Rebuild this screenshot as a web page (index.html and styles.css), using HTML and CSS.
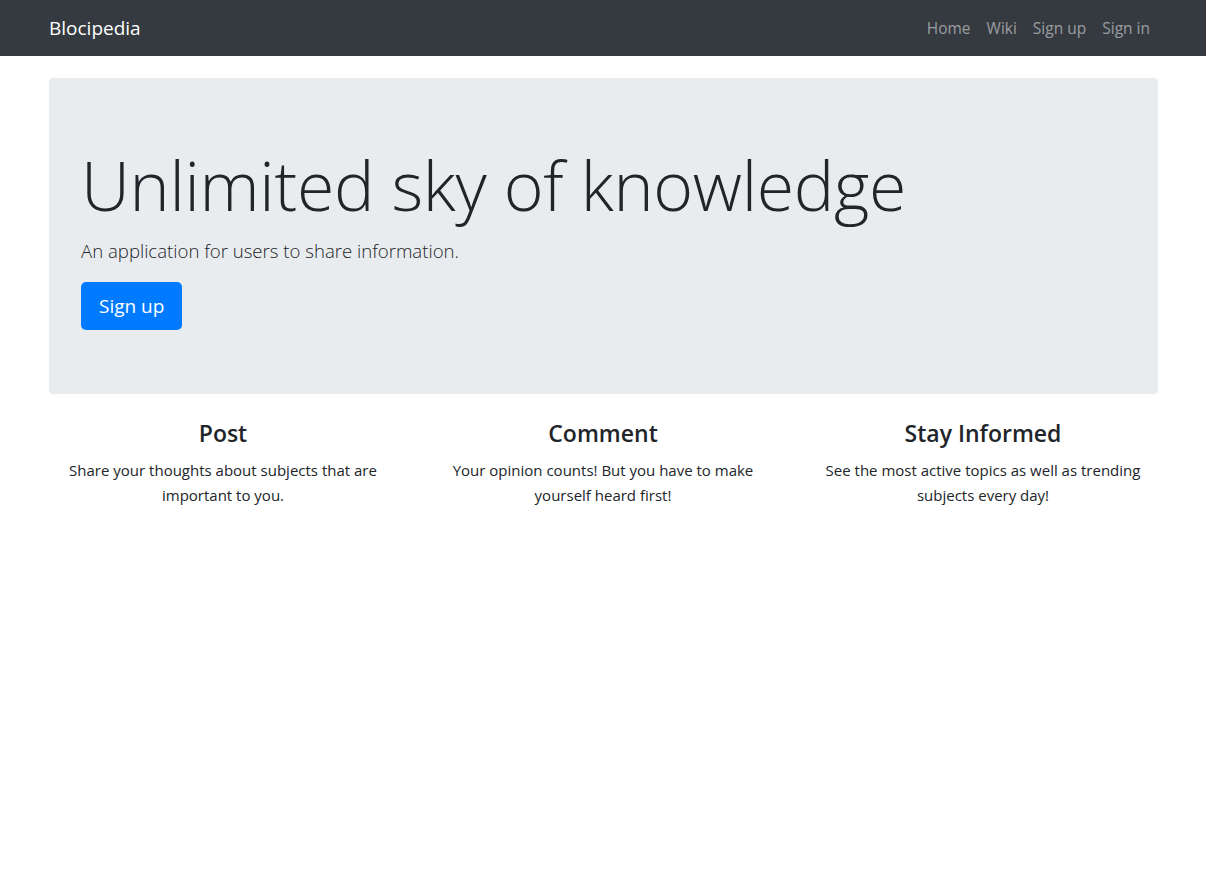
FILE: index.html
```html
<!DOCTYPE html>
<html lang="en">
<head>
<meta charset="utf-8">
<title>Blocipedia</title>
<link rel="stylesheet" href="styles.css">
</head>
<body>
<nav class="navbar">
  <div class="container navbar-inner">
    <a class="brand" href="#">Blocipedia</a>
    <ul class="nav-links">
      <li><a href="#">Home</a></li>
      <li><a href="#">Wiki</a></li>
      <li><a href="#">Sign up</a></li>
      <li><a href="#">Sign in</a></li>
    </ul>
  </div>
</nav>
<main class="container">
  <section class="jumbotron">
    <h1 class="display">Unlimited sky of knowledge</h1>
    <p class="lead">An application for users to share information.</p>
    <a class="btn-primary" href="#">Sign up</a>
  </section>
  <section class="features">
    <div class="feature">
      <h3>Post</h3>
      <p>Share your thoughts about subjects that are important to you.</p>
    </div>
    <div class="feature">
      <h3>Comment</h3>
      <p>Your opinion counts! But you have to make yourself heard first!</p>
    </div>
    <div class="feature">
      <h3>Stay Informed</h3>
      <p>See the most active topics as well as trending subjects every day!</p>
    </div>
  </section>
</main>
</body>
</html>
```

FILE: styles.css
```css
* { box-sizing: border-box; }
html, body { margin: 0; padding: 0; }
body {
  font-family: "Open Sans", "Noto Sans", "Liberation Sans", sans-serif;
  font-size: 16px;
  line-height: 1.5;
  color: #212529;
  background: #fff;
}
a { text-decoration: none; }
.container {
  width: 1110px;
  margin: 0 auto;
}
.navbar {
  background: #343a40;
  height: 56px;
}
.navbar-inner {
  height: 56px;
  display: flex;
  align-items: center;
  justify-content: space-between;
}
.brand {
  color: #fff;
  font-size: 19px;
  line-height: 30px;
  margin-left: 1px;
}
.nav-links {
  list-style: none;
  margin: 0;
  padding: 2px 0 0;
  display: flex;
}
.nav-links a {
  display: block;
  padding: 8px 8px;
  color: rgba(255,255,255,0.5);
  font-size: 15.5px;
}
.jumbotron {
  margin-top: 22px;
  background: #e9ecef;
  border-radius: 4px;
  padding: 64px 32px;
  margin-left: 1px;
}
.display {
  margin: 0 0 8px;
  font-size: 68px;
  font-weight: 300;
  line-height: 86px;
  letter-spacing: -0.3px;
}
.lead {
  margin: 0 0 16px;
  font-size: 18.6px;
  font-weight: 300;
  line-height: 30px;
}
.btn-primary {
  display: inline-block;
  background: #007bff;
  color: #fff;
  font-size: 19px;
  line-height: 30px;
  padding: 9px 18px;
  border-radius: 5px;
}
.features {
  margin: 22px -15px 0;
  display: grid;
  grid-template-columns: repeat(3, 1fr);
}
.feature {
  padding: 0 15px;
  text-align: center;
}
.feature h3 {
  margin: 0 0 8px;
  font-size: 23px;
  font-weight: 600;
  line-height: 34px;
}
.feature p {
  margin: 0;
  font-size: 15px;
  line-height: 25px;
}
```
